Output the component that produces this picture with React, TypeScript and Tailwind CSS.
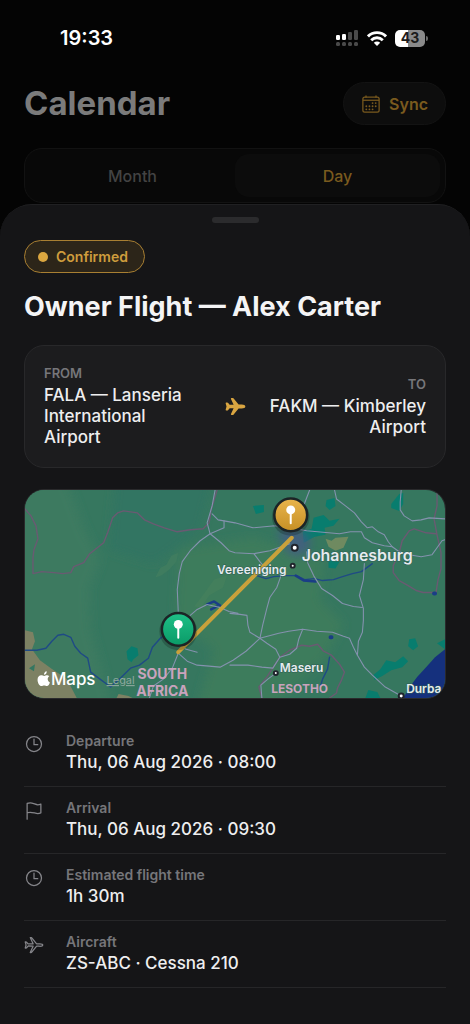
import { IoAirplane, IoAirplaneOutline, IoCalendarOutline, IoFlagOutline, IoTimeOutline } from 'react-icons/io5';
import type { IconType } from 'react-icons';

interface Detail {
    icon: IconType;
    label: string;
    value: string;
}

const DETAILS: Detail[] = [
    { icon: IoTimeOutline, label: 'Departure', value: 'Thu, 06 Aug 2026 · 08:00' },
    { icon: IoFlagOutline, label: 'Arrival', value: 'Thu, 06 Aug 2026 · 09:30' },
    { icon: IoTimeOutline, label: 'Estimated flight time', value: '1h 30m' },
    { icon: IoAirplaneOutline, label: 'Aircraft', value: 'ZS-ABC · Cessna 210' },
];

const ROADS = [
    'M191 0L188 16L183 33L186 44L176 51L166 61L158 72L155 84L153 100L154 123',
    'M188 24L194 30L200 31L211 33L229 38L251 36L266 38L283 41L316 44L327 42L338 42L341 48L349 53L361 56L369 57L376 62L386 65L398 67L409 65L414 58L419 51L422 50',
    'M200 31L200 38L186 44L197 53L205 61L211 63L230 64L246 61L266 54',
    'M311 0L313 9L322 16L331 23L338 32L344 38L349 37L355 42L361 45L365 52L369 57',
    'M286 0L281 13L274 26L275 38',
    'M378 0L377 12L377 20L381 26L389 31L398 30L406 28L422 29',
    'M341 74L340 90L336 106L340 119L340 131L339 143L335 152L334 166',
    'M283 62L284 73L290 86L298 99L309 106L319 114L330 117L339 118',
    'M230 64L236 72L246 84',
    'M258 84L253 98L246 108L243 119L239 135L236 149',
    'M154 164L163 172L173 176L185 177L196 178L209 171L222 162L236 149L255 144L265 142L279 140L293 142L309 143L320 147L326 149L330 158L334 166L341 178L349 186L362 198L378 207',
    'M206 124L216 125L223 126L224 136L226 143L236 149L243 154L252 160L256 168L249 179L238 178L224 176L206 176',
    'M256 168L266 165L273 159L275 150L279 140',
    'M252 184L244 190L237 196L238 209',
    'M154 164L148 179L139 190L129 197L125 209',
    'M166 126L173 120L183 115L196 118L205 122L214 124',
    'M154 155L162 160L173 163',
];

const BORDERS = [
    'M0 19L6 26L11 36L13 49L9 60L8 68L8 84L17 82L29 83L38 84L46 83L49 77L59 73L65 64L79 53L83 43L88 28L93 23L99 21L113 23L120 30L129 34L140 38L153 42L166 40L179 39L185 33L187 20L193 0',
    'M414 0L414 16L411 29L414 45L418 63L418 79L415 90L413 103L400 103L393 101L385 96L376 91L370 83L370 76L376 63L379 51L386 41L391 39L403 43L413 44',
    'M238 209L235 198L243 188L256 168L266 161L278 156L286 157L294 155L300 162L308 166L316 175L321 183L318 191L314 199L313 204L306 209',
];

const RIVERS = [
    'M0 161L12 161L21 159L27 152L33 146L39 145L46 148L50 157L56 164L63 169L66 183L74 189L86 198L96 189L106 179L115 176L124 169L128 158L136 149L148 140',
    'M233 86L242 89L250 87L262 86L273 86L281 90L291 89L299 91L310 90L319 87L329 84L338 82L349 74',
    'M306 168L304 180L299 190L296 200',
];

function StatusBar() {
    return (
        <div className="flex h-[76px] items-center justify-between pl-[60px] pr-[42px] text-white">
            <time className="text-[20px] font-semibold">19:33</time>
            <div className="flex items-center gap-2">
                <svg width="24" height="16" viewBox="0 0 24 16" fill="currentColor" aria-hidden="true">
                    <rect x="1" y="5" width="4" height="5" rx="1.2" />
                    <rect x="7" y="4" width="4" height="6" rx="1.2" />
                    <g opacity="0.28">
                        <rect x="13" y="2" width="4" height="8" rx="1.2" />
                        <rect x="19" y="0" width="4" height="10" rx="1.2" />
                        <rect x="1" y="12" width="4" height="4" rx="1.5" />
                        <rect x="7" y="12" width="4" height="4" rx="1.5" />
                        <rect x="13" y="12" width="4" height="4" rx="1.5" />
                        <rect x="19" y="12" width="4" height="4" rx="1.5" />
                    </g>
                </svg>
                <svg width="20" height="15" viewBox="0 0 20 15" fill="none" stroke="currentColor" strokeWidth="2.9" aria-hidden="true">
                    <path d="M1 5.4C6 .4 14 .4 19 5.4" />
                    <path d="M4.2 9.2C7.6 6 12.4 6 15.800 9.2" />
                    <path d="M6.800 11.700C8.600 10.200 11.400 10.200 13.200 11.700L10 15Z" fill="currentColor" stroke="none" />
                </svg>
                <div className="flex items-center gap-px">
                    <div className="flex h-[17px] w-[30px] items-center justify-center rounded-[5px] bg-linear-to-r from-white from-43% to-[#8a8a8a] to-43% text-[14px] leading-none font-bold text-[#1c1c1c]">
                        43
                    </div>
                    <div className="h-[5px] w-[2px] rounded-r-full bg-[#6a6a6a]" />
                </div>
            </div>
        </div>
    );
}

function Pin({ x, y, fill }: { x: number; y: number; fill: string }) {
    return (
        <g transform={`translate(${x} ${y})`}>
            <circle cy="2" r="19" fill="#000" opacity="0.2" />
            <circle r="16.5" fill={fill} stroke="#1c2426" strokeWidth="2.5" />
            <circle cy="-5" r="4.5" fill="#fff" />
            <path d="M0 -2V8.5" stroke="#fff" strokeWidth="2" strokeLinecap="round" />
        </g>
    );
}

function RouteMap() {
    return (
        <div className="mt-[21px] overflow-hidden rounded-[20px] border border-[#2a2a2c]">
            <svg className="block w-full" viewBox="0 0 422 209" role="img" aria-label="Route map">
                <defs>
                    <linearGradient id="gold" x1="0" y1="0" x2="0" y2="1">
                        <stop offset="0" stopColor="#e9b54c" />
                        <stop offset="1" stopColor="#c68f25" />
                    </linearGradient>
                    <linearGradient id="green" x1="0" y1="0" x2="0" y2="1">
                        <stop offset="0" stopColor="#1fc087" />
                        <stop offset="1" stopColor="#0a9a67" />
                    </linearGradient>
                    <filter id="soft" x="-20%" y="-20%" width="140%" height="140%">
                        <feGaussianBlur stdDeviation="5" />
                    </filter>
                </defs>

                {/* Terrain */}
                <rect width="422" height="209" fill="#36775f" />
                <g filter="url(#soft)">
                    <path d="M-20 -20H38L60 40L76 70L64 100L66 140L76 175L90 229H-20Z" fill="#3d7a61" />
                    <path d="M92 -20H190L176 40L130 74L84 60Z" fill="#317562" />
                    <path d="M154 60L230 48L300 70L296 110L320 135L300 170L240 229H170L190 160L152 130Z" fill="#3d7b5c" />
                </g>
                <path d="M131 88L136 78L142 75L147 66L154 63L152 72L145 80L137 86Z" fill="#3f7c5f" />
                <path d="M170 117L180 104L190 90L203 86L199 98L185 106L177 118Z" fill="#437f5c" />
                <path d="M0 141L8 143L10 152L7 160L15 171L26 179L42 190L52 209H0Z" fill="#7d8163" />
                <path d="M4 179L10 175L9 182Z" fill="#347660" />
                <path d="M94 205L104 207L108 209H92Z" fill="#7d8163" />
                <path d="M302 49L308 51L312 48L325 47L320 58L312 61L305 57Z" fill="#6f8a60" />
                <g fill="#087d6e">
                    <path d="M102 162L107 157L113 159L114 166L109 170L107 173L103 170Z" />
                    <path d="M229 16L240 15L240 22L232 24Z" />
                    <path d="M303 10L311 8L312 16L306 20L302 16Z" />
                    <path d="M290 28L300 25L306 31L316 29L310 36L301 38L302 45L291 47L280 53L279 42L288 39Z" />
                    <path d="M368 14L376 4L380 3L380 14L376 21L368 18Z" />
                    <path d="M305 71L316 72L312 79L305 78Z" />
                    <path d="M386 150L392 149L395 157L390 161L385 157Z" />
                    <path d="M350 186L357 180L363 171L372 173L380 167L385 172L379 178L368 181L359 187L351 191Z" />
                    <path d="M345 201L354 203L357 209H342Z" />
                    <path d="M414 154L422 150V160Z" />
                </g>
                <path d="M422 160L412 168L403 178L394 188L388 196L380 209H422Z" fill="#15307d" />
                <path d="M253 40L273 37L287 49L284 64L268 67L260 57Z" fill="#47598a" opacity="0.7" filter="url(#soft)" />

                <g fill="none" strokeLinejoin="round" strokeLinecap="round">
                    <g stroke="#6a5a72" strokeWidth="1.4">
                        {BORDERS.map((d) => <path key={d} d={d} />)}
                    </g>
                    <g stroke="#1f4a85" strokeWidth="1.4">
                        {RIVERS.map((d) => <path key={d} d={d} />)}
                    </g>
                    <path d="M272 86L280 91L292 92M183 115L190 112L196 116M187 120L193 117" stroke="#1a3d86" strokeWidth="2.5" />
                    <path d="M307 148h1M411 104h1" stroke="#1a3d86" strokeWidth="4" />
                    <g stroke="#8492ae" strokeWidth="1.1">
                        {ROADS.map((d) => <path key={d} d={d} />)}
                    </g>
                </g>

                {/* Route */}
                <path d="M268 48L154 163" stroke="#c9a13b" strokeWidth="4" strokeLinecap="round" />

                {/* City markers */}
                <g fill="#fff" stroke="#20242c" strokeWidth="2">
                    <circle cx="271" cy="58" r="3" />
                    <circle cx="269" cy="76" r="2" />
                    <circle cx="252" cy="184" r="2" />
                    <circle cx="378" cy="207" r="2.5" />
                </g>
                <g className="font-semibold" fill="#e6ebee" stroke="#2f5f55" strokeWidth="1" paintOrder="stroke">
                    <text x="278" y="71" fontSize="16">Johannesburg</text>
                    <text x="193" y="84" fontSize="12">Vereeniging</text>
                    <text x="256" y="183" fontSize="12">Maseru</text>
                    <text x="383" y="204" fontSize="12">Durba</text>
                </g>
                <g className="font-bold" fill="#c9a3bd" textAnchor="middle">
                    <text x="138" y="190" fontSize="14">SOUTH</text>
                    <text x="138" y="207" fontSize="14">AFRICA</text>
                    <text x="276" y="204" fontSize="12">LESOTHO</text>
                </g>

                <Pin x={267} y={25} fill="url(#gold)" />
                <Pin x={154} y={140} fill="url(#green)" />

                {/* Attribution */}
                <g fill="#fff">
                    <path d="M22.200 186.200C21 186.200 20.200 186.900 19.300 186.900C18.300 186.900 17.400 186.200 16.300 186.200C14.300 186.200 12.600 187.900 12.600 190.600C12.600 193.800 14.700 197 16.500 197C17.500 197 18.100 196.400 19.300 196.400C20.500 196.400 20.900 197 22 197C23.400 197 24.500 195.200 25 193.300C23.500 192.600 22.800 191.400 22.800 190C22.800 188.800 23.400 187.900 24.400 187.200C23.800 186.500 23 186.200 22.200 186.200Z" />
                    <path d="M21.800 182.200C20.200 182.400 18.900 183.900 19.100 185.700C20.700 185.700 22 184.200 21.800 182.200Z" />
                    <text x="26" y="196" fontSize="17" className="font-medium">Maps</text>
                </g>
                <a href="#legal">
                    <text x="82" y="195" fontSize="11" fill="#8fa89e" textDecoration="underline">Legal</text>
                </a>
            </svg>
        </div>
    );
}

export default function App() {
    return (
        <div className="flex min-h-screen flex-col bg-[#040404] font-['Inter',sans-serif]">
            <StatusBar />

            {/* Dimmed calendar screen behind the sheet */}
            <header className="flex items-center justify-between px-6 pt-[6px]">
                <h1 className="text-[33px] leading-[43px] font-bold text-[#7b7b7b]">Calendar</h1>
                <button className="flex h-[43px] items-center gap-2 rounded-full border border-[#131313] bg-[#0d0d0d] px-[17px] text-[16px] font-semibold text-[#7a5a1e]">
                    <IoCalendarOutline size={20} />
                    Sync
                </button>
            </header>
            <div className="mx-6 mt-[23px] grid h-[55px] grid-cols-2 rounded-[18px] border border-[#121212] bg-[#080808] p-[5px] text-[16px] font-medium">
                <button className="text-[#434343]">Month</button>
                <button className="rounded-[14px] bg-[#0c0c0c] text-[#7a5a1e]">Day</button>
            </div>

            {/* Sheet */}
            <main className="mt-px flex-1 rounded-t-[32px] border-t border-[#202022] bg-[#151517] px-6 pt-3 pb-[35px]">
                <div className="mx-auto h-[6px] w-[47px] rounded-full bg-[#2b2b2d]" />

                <div className="mt-[17px] flex h-[33px] w-fit items-center gap-2 rounded-full border border-[#a87f32] bg-[#2c2519] pr-4 pl-[13px] text-[14px] font-semibold text-[#cf9d3d]">
                    <span className="size-[10px] rounded-full bg-[#dba740]" />
                    Confirmed
                </div>
                <h2 className="mt-4 text-[27px] leading-[36px] font-bold text-[#f4f4f5]">Owner Flight — Alex Carter</h2>

                <section className="mt-5 flex items-center gap-5 rounded-[20px] border border-[#28282a] bg-[#1c1c1e] p-[19px]">
                    <div className="flex-1">
                        <p className="mb-1 text-[13px] leading-[16px] font-semibold text-[#76767a]">FROM</p>
                        <p className="text-[17px] leading-[21px] font-medium text-[#eeeeef]">FALA — Lanseria International Airport</p>
                    </div>
                    <IoAirplane size={21} className="text-[#d9a541]" />
                    <div className="flex-1 text-right">
                        <p className="mb-1 text-[13px] leading-[16px] font-semibold text-[#76767a]">TO</p>
                        <p className="text-[17px] leading-[21px] font-medium text-[#eeeeef]">FAKM — Kimberley Airport</p>
                    </div>
                </section>

                <RouteMap />

                <dl className="mt-[21px]">
                    {DETAILS.map(({ icon: Icon, label, value }) => (
                        <div key={label} className="flex gap-[22px] border-b border-[#262628] py-3">
                            <Icon size={20} className="mt-[2px] text-[#85858a]" />
                            <div>
                                <dt className="text-[14px] leading-[18px] font-semibold text-[#76767a]">{label}</dt>
                                <dd className="text-[17px] leading-[24px] font-medium text-[#eeeeef]">{value}</dd>
                            </div>
                        </div>
                    ))}
                </dl>
            </main>
        </div>
    );
}
